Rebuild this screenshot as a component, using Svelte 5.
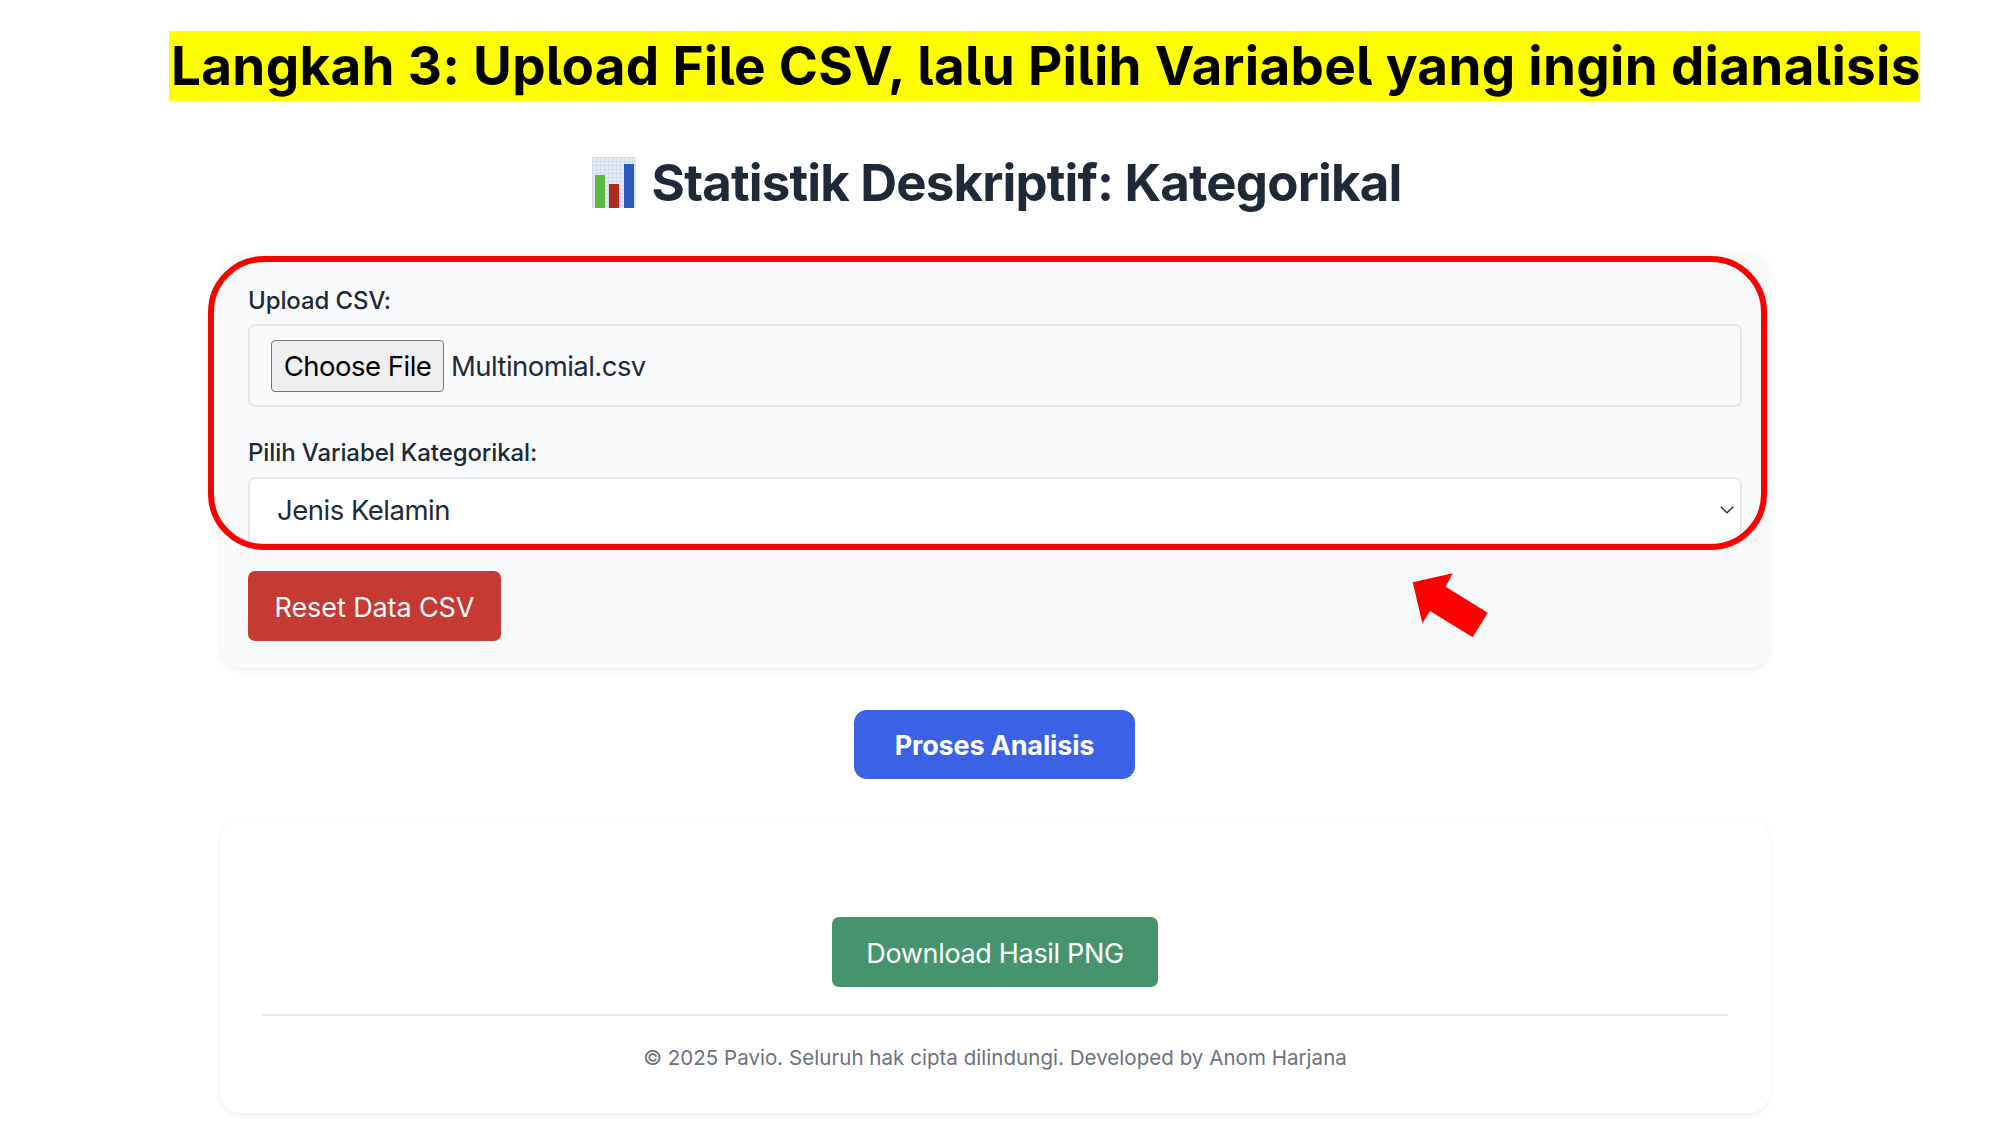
<script lang="ts">
    let variable = $state("Jenis Kelamin");
    let fileName = "Multinomial.csv";
</script>

<div class="page">
    <div class="banner">
        <h2 class="banner__text">Langkah 3: Upload File CSV, lalu Pilih Variabel yang ingin dianalisis</h2>
    </div>

    <main class="main">
        <h1 class="title">
            <svg class="title__icon" viewBox="0 0 44 51" aria-hidden="true">
                <defs>
                    <pattern id="grid" width="4" height="4" patternUnits="userSpaceOnUse">
                        <rect width="4" height="4" fill="#e6ecf4" />
                        <path d="M0 .5H4M.5 0V4" stroke="#cfdbe9" stroke-width="1" />
                    </pattern>
                </defs>
                <rect width="44" height="51" fill="url(#grid)" />
                <rect x="3" y="18" width="10" height="33" fill="#5cb944" />
                <rect x="17" y="27" width="10" height="24" fill="#b12a1c" />
                <rect x="32" y="7" width="10" height="44" fill="#2a5cc0" />
            </svg>
            <span>Statistik Deskriptif: Kategorikal</span>
        </h1>

        <section class="card card--form">
            <label class="field__label" for="csv">Upload CSV:</label>
            <div class="file" id="csv">
                <button class="file__button">Choose File</button>
                <span class="file__name">{fileName}</span>
            </div>

            <label class="field__label field__label--second" for="variable">Pilih Variabel Kategorikal:</label>
            <div class="select">
                <select id="variable" class="select__input" bind:value={variable}>
                    <option>Jenis Kelamin</option>
                    <option>Pendidikan</option>
                </select>
                <svg class="select__chevron" viewBox="0 0 14 8" aria-hidden="true">
                    <path d="M.8.8 7 6.8 13.2.8" fill="none" stroke="#2d3748" stroke-width="1.5" />
                </svg>
            </div>

            <button class="btn btn--reset">Reset Data CSV</button>
        </section>

        <div class="actions">
            <button class="btn btn--process">Proses Analisis</button>
        </div>

        <section class="card card--result">
            <div class="actions">
                <button class="btn btn--download">Download Hasil PNG</button>
            </div>
            <footer class="footer">© 2025 Pavio. Seluruh hak cipta dilindungi. Developed by Anom Harjana</footer>
        </section>
    </main>

    <!-- annotations drawn over the screenshot -->
    <div class="highlight"></div>
    <svg class="arrow" viewBox="0 0 80 70" aria-hidden="true">
        <polygon points="2.7,11.3 42.7,2.3 35.7,15.7 77.7,41.7 62.7,66.3 20,40 12.3,52.3" fill="#ff0000" />
    </svg>
</div>

<style>
    :global(body) {
        margin: 0;
        background: #fff;
    }

    .page {
        position: relative;
        width: 2000px;
        height: 1125px;
        overflow: hidden;
        padding-top: 31px;
        box-sizing: border-box;
        font-family: Inter, "Liberation Sans", sans-serif;
    }

    .banner {
        display: flex;
        align-items: center;
        width: 1751px;
        height: 70px;
        margin-left: 169px;
        background: #ffff00;
    }

    .banner__text {
        margin: 0 0 0 2px;
        font-family: Inter, sans-serif;
        font-feature-settings: "cv05";
        font-size: 53px;
        font-weight: 700;
        letter-spacing: 0.3px;
        line-height: 70px;
        color: #000;
        white-space: nowrap;
    }

    .main {
        width: 1549px;
        margin-left: 220px;
    }

    .title {
        display: flex;
        justify-content: center;
        align-items: center;
        gap: 16px;
        height: 60px;
        margin: 51px 0 41px;
        padding-left: 4px;
        font-size: 51px;
        font-weight: 700;
        letter-spacing: -0.85px;
        color: #1f2937;
    }

    .title__icon {
        width: 44px;
        height: 51px;
    }

    .card {
        border-radius: 20px;
        box-shadow: 0 2px 6px rgba(0, 0, 0, 0.07);
    }

    .card--form {
        display: flex;
        flex-direction: column;
        align-items: flex-start;
        padding: 32px 28px 27px;
        background: #f9fafb;
    }

    .field__label {
        margin-top: 1px;
        margin-bottom: 8px;
        font-size: 24px;
        font-weight: 500;
        letter-spacing: -0.1px;
        line-height: 30px;
        color: #1f2937;
    }

    .field__label--second {
        margin-top: 31px;
        margin-bottom: 9px;
    }

    .file {
        display: flex;
        align-items: center;
        box-sizing: border-box;
        width: 1494px;
        height: 83px;
        padding-left: 21px;
        border: 2px solid #e5e7eb;
        border-radius: 7px;
    }

    .file__button {
        box-sizing: border-box;
        width: 173px;
        height: 52px;
        padding: 0;
        border: 1.5px solid #767676;
        border-radius: 4px;
        background: #efefef;
        font: inherit;
        font-size: 27.5px;
        letter-spacing: -0.5px;
        color: #000;
    }

    .file__name {
        margin-left: 7px;
        font-size: 27.5px;
        letter-spacing: -0.55px;
        color: #1f2937;
    }

    .select {
        position: relative;
        width: 1494px;
    }

    .select__input {
        display: block;
        box-sizing: border-box;
        width: 100%;
        height: 68px;
        padding: 0 0 2px 27px;
        border: 2px solid #e5e7eb;
        border-radius: 7px;
        background: #fff;
        appearance: none;
        font: inherit;
        font-size: 27.5px;
        letter-spacing: -0.5px;
        color: #1f2937;
    }

    .select__chevron {
        position: absolute;
        top: 29px;
        right: 8px;
        width: 14px;
        height: 8px;
    }

    .btn {
        height: 70px;
        padding: 2px 0 0;
        border: none;
        border-radius: 7px;
        font: inherit;
        font-size: 27px;
        color: #fff;
    }

    .btn--reset {
        width: 253px;
        margin-top: 26px;
        letter-spacing: -0.1px;
        background: #c53a32;
    }

    .actions {
        display: flex;
        justify-content: center;
    }

    .btn--process {
        width: 281px;
        height: 69px;
        margin: 42px 0 41px;
        padding: 1px 0 0;
        border-radius: 13px;
        letter-spacing: -0.15px;
        background: #3b62e4;
        font-weight: 700;
    }

    .card--result {
        padding: 97px 41px 40px 42px;
        background: #fff;
    }

    .btn--download {
        width: 326px;
        letter-spacing: -0.33px;
        background: #45946d;
    }

    .footer {
        margin-top: 27px;
        padding-top: 27px;
        border-top: 2px solid #e5e7eb;
        font-size: 20.5px;
        letter-spacing: 0.04px;
        line-height: 30px;
        text-align: center;
        color: #6b7280;
    }

    .highlight {
        position: absolute;
        top: 256px;
        left: 208px;
        box-sizing: border-box;
        width: 1559px;
        height: 294px;
        border: 6.5px solid #ff0000;
        border-radius: 56px;
    }

    .arrow {
        position: absolute;
        top: 571px;
        left: 1410px;
        width: 80px;
        height: 70px;
    }
</style>
